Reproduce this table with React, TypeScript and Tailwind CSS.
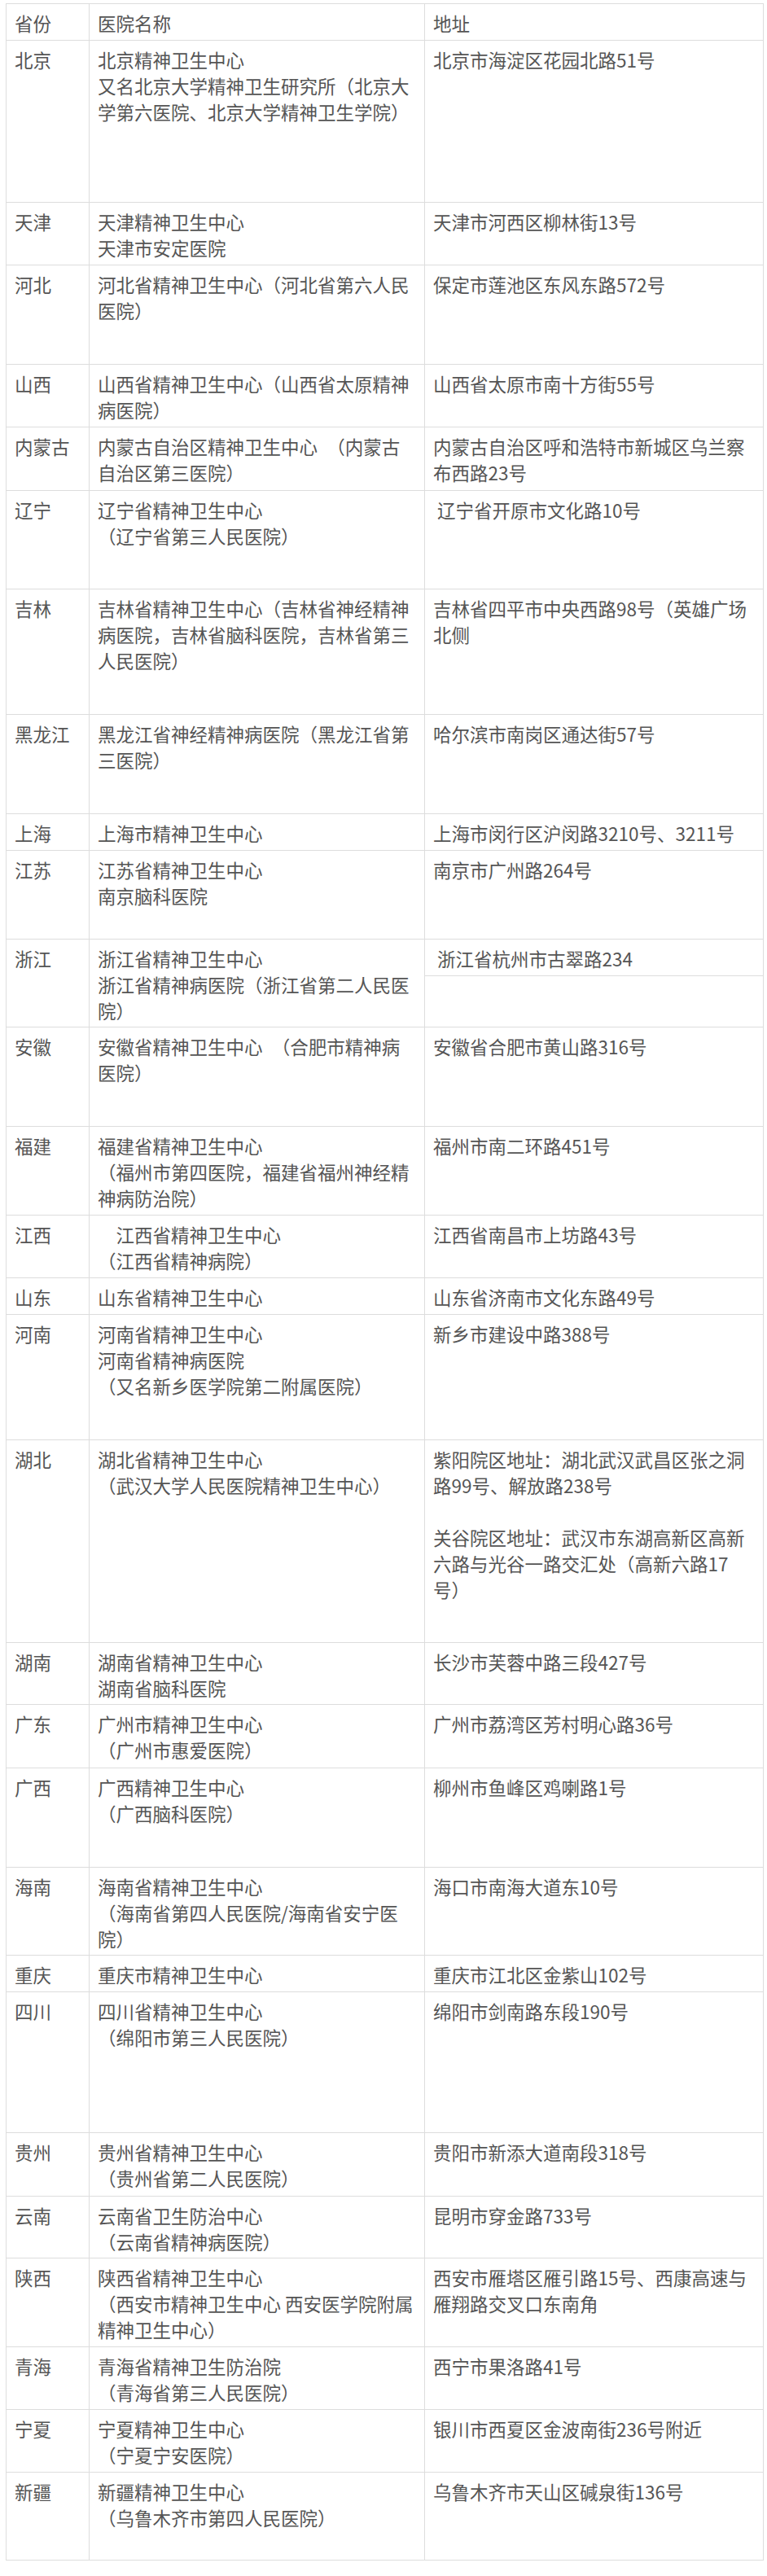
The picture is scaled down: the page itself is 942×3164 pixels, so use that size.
import React from "react";

type Row = {
  p: string;
  h: number;
  name: string[];
  addr: string[];
  split?: boolean;
};

const rows: Row[] = [
  { p: "北京", h: 199, name: ["北京精神卫生中心", "又名北京大学精神卫生研究所（北京大", "学第六医院、北京大学精神卫生学院）"], addr: ["北京市海淀区花园北路51号"] },
  { p: "天津", h: 77, name: ["天津精神卫生中心", "天津市安定医院"], addr: ["天津市河西区柳林街13号"] },
  { p: "河北", h: 122, name: ["河北省精神卫生中心（河北省第六人民", "医院）"], addr: ["保定市莲池区东风东路572号"] },
  { p: "山西", h: 77, name: ["山西省精神卫生中心（山西省太原精神", "病医院）"], addr: ["山西省太原市南十方街55号"] },
  { p: "内蒙古", h: 78, name: ["内蒙古自治区精神卫生中心\u2002（内蒙古", "自治区第三医院）"], addr: ["内蒙古自治区呼和浩特市新城区乌兰察", "布西路23号"] },
  { p: "辽宁", h: 121, name: ["辽宁省精神卫生中心", "（辽宁省第三人民医院）"], addr: ["\u00a0辽宁省开原市文化路10号"] },
  { p: "吉林", h: 154, name: ["吉林省精神卫生中心（吉林省神经精神", "病医院，吉林省脑科医院，吉林省第三", "人民医院）"], addr: ["吉林省四平市中央西路98号（英雄广场", "北侧"] },
  { p: "黑龙江", h: 122, name: ["黑龙江省神经精神病医院（黑龙江省第", "三医院）"], addr: ["哈尔滨市南岗区通达街57号"] },
  { p: "上海", h: 45, name: ["上海市精神卫生中心"], addr: ["上海市闵行区沪闵路3210号、3211号"] },
  { p: "江苏", h: 109, name: ["江苏省精神卫生中心", "南京脑科医院"], addr: ["南京市广州路264号"] },
  { p: "浙江", h: 108, name: ["浙江省精神卫生中心", "浙江省精神病医院（浙江省第二人民医", "院）"], addr: ["\u00a0浙江省杭州市古翠路234"], split: true },
  { p: "安徽", h: 122, name: ["安徽省精神卫生中心\u2002（合肥市精神病", "医院）"], addr: ["安徽省合肥市黄山路316号"] },
  { p: "福建", h: 109, name: ["福建省精神卫生中心", "（福州市第四医院，福建省福州神经精", "神病防治院）"], addr: ["福州市南二环路451号"] },
  { p: "江西", h: 77, name: ["\u3000江西省精神卫生中心", "（江西省精神病院）"], addr: ["江西省南昌市上坊路43号"] },
  { p: "山东", h: 45, name: ["山东省精神卫生中心"], addr: ["山东省济南市文化东路49号"] },
  { p: "河南", h: 154, name: ["河南省精神卫生中心", "河南省精神病医院", "（又名新乡医学院第二附属医院）"], addr: ["新乡市建设中路388号"] },
  { p: "湖北", h: 249, name: ["湖北省精神卫生中心", "（武汉大学人民医院精神卫生中心）"], addr: ["紫阳院区地址：湖北武汉武昌区张之洞", "路99号、解放路238号", "", "关谷院区地址：武汉市东湖高新区高新", "六路与光谷一路交汇处（高新六路17", "号）"] },
  { p: "湖南", h: 76, name: ["湖南省精神卫生中心", "湖南省脑科医院"], addr: ["长沙市芙蓉中路三段427号"] },
  { p: "广东", h: 78, name: ["广州市精神卫生中心", "（广州市惠爱医院）"], addr: ["广州市荔湾区芳村明心路36号"] },
  { p: "广西", h: 122, name: ["广西精神卫生中心", "（广西脑科医院）"], addr: ["柳州市鱼峰区鸡喇路1号"] },
  { p: "海南", h: 108, name: ["海南省精神卫生中心", "（海南省第四人民医院/海南省安宁医", "院）"], addr: ["海口市南海大道东10号"] },
  { p: "重庆", h: 45, name: ["重庆市精神卫生中心"], addr: ["重庆市江北区金紫山102号"] },
  { p: "四川", h: 173, name: ["四川省精神卫生中心", "（绵阳市第三人民医院）"], addr: ["绵阳市剑南路东段190号"] },
  { p: "贵州", h: 78, name: ["贵州省精神卫生中心", "（贵州省第二人民医院）"], addr: ["贵阳市新添大道南段318号"] },
  { p: "云南", h: 76, name: ["云南省卫生防治中心", "（云南省精神病医院）"], addr: ["昆明市穿金路733号"] },
  { p: "陕西", h: 109, name: ["陕西省精神卫生中心", "（西安市精神卫生中心 西安医学院附属", "精神卫生中心）"], addr: ["西安市雁塔区雁引路15号、西康高速与", "雁翔路交叉口东南角"] },
  { p: "青海", h: 77, name: ["青海省精神卫生防治院", "（青海省第三人民医院）"], addr: ["西宁市果洛路41号"] },
  { p: "宁夏", h: 77, name: ["宁夏精神卫生中心", "（宁夏宁安医院）"], addr: ["银川市西夏区金波南街236号附近"] },
  { p: "新疆", h: 108, name: ["新疆精神卫生中心", "（乌鲁木齐市第四人民医院）"], addr: ["乌鲁木齐市天山区碱泉街136号"] },
];

function Lines({ lines }: { lines: string[] }) {
  return (
    <>
      {lines.map((l, i) => (
        <div key={i} className="h-[32px] whitespace-pre leading-[32px]">
          {l}
        </div>
      ))}
    </>
  );
}

export default function App() {
  return (
    <div className="min-h-[3164px] w-[942px] bg-white pt-[4px] font-['Noto_Sans_CJK_SC','Noto_Sans',sans-serif] text-[22.5px] text-[#555555]">
      <div className="ml-[7px] w-[931px] border-l border-t border-[#dddddd]">
        <div className="grid h-[45px] grid-cols-[102px_412px_416px] border-b border-[#dddddd]">
          <div className="border-r border-[#dddddd] px-[10px] pt-[7px]">
            <Lines lines={["省份"]} />
          </div>
          <div className="border-r border-[#dddddd] px-[10px] pt-[7px]">
            <Lines lines={["医院名称"]} />
          </div>
          <div className="border-r border-[#dddddd] px-[10px] pt-[7px]">
            <Lines lines={["地址"]} />
          </div>
        </div>
        {rows.map((r) => (
          <div
            key={r.p}
            className="grid grid-cols-[102px_412px_416px] border-b border-[#dddddd]"
            style={{ height: r.h }}
          >
            <div className="border-r border-[#dddddd] px-[10px] pt-[7px]">
              <Lines lines={[r.p]} />
            </div>
            <div className="border-r border-[#dddddd] px-[10px] pt-[7px]">
              <Lines lines={r.name} />
            </div>
            {r.split ? (
              <div className="border-r border-[#dddddd]">
                <div className="h-[45px] border-b border-[#dddddd] px-[10px] pt-[7px]">
                  <Lines lines={r.addr} />
                </div>
              </div>
            ) : (
              <div className="border-r border-[#dddddd] px-[10px] pt-[7px]">
                <Lines lines={r.addr} />
              </div>
            )}
          </div>
        ))}
      </div>
    </div>
  );
}
